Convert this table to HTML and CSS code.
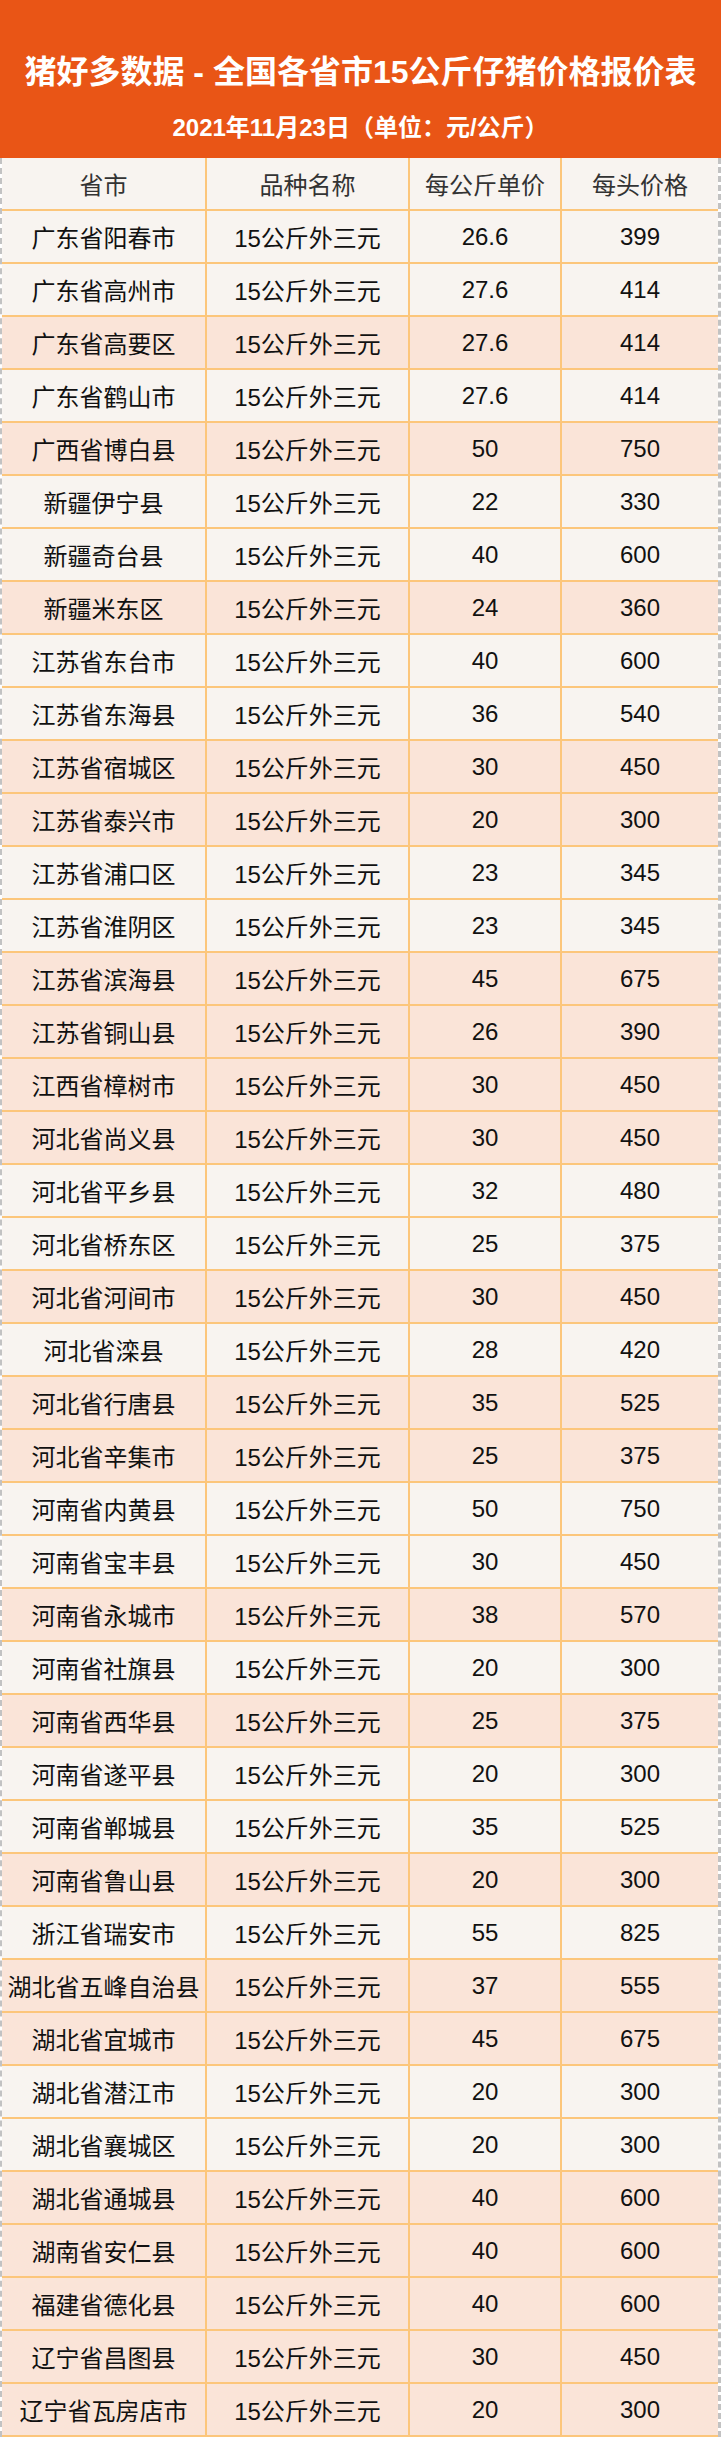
FILE: index.html
```html
<!DOCTYPE html>
<html lang="zh-CN">
<head>
<meta charset="utf-8">
<title>猪好多数据</title>
<link rel="stylesheet" href="styles.css">
</head>
<body>
<div class="page">
  <header class="banner">
    <h1 class="title">猪好多数据 - 全国各省市15公斤仔猪价格报价表</h1>
    <p class="subtitle">2021年11月23日（单位：元/公斤）</p>
  </header>
  <div class="table">
    <div class="row head"><div class="cell">省市</div><div class="cell">品种名称</div><div class="cell">每公斤单价</div><div class="cell">每头价格</div></div>
    <div class="row"><div class="cell">广东省阳春市</div><div class="cell">15公斤外三元</div><div class="cell">26.6</div><div class="cell">399</div></div>
    <div class="row"><div class="cell">广东省高州市</div><div class="cell">15公斤外三元</div><div class="cell">27.6</div><div class="cell">414</div></div>
    <div class="row peach"><div class="cell">广东省高要区</div><div class="cell">15公斤外三元</div><div class="cell">27.6</div><div class="cell">414</div></div>
    <div class="row"><div class="cell">广东省鹤山市</div><div class="cell">15公斤外三元</div><div class="cell">27.6</div><div class="cell">414</div></div>
    <div class="row peach"><div class="cell">广西省博白县</div><div class="cell">15公斤外三元</div><div class="cell">50</div><div class="cell">750</div></div>
    <div class="row"><div class="cell">新疆伊宁县</div><div class="cell">15公斤外三元</div><div class="cell">22</div><div class="cell">330</div></div>
    <div class="row"><div class="cell">新疆奇台县</div><div class="cell">15公斤外三元</div><div class="cell">40</div><div class="cell">600</div></div>
    <div class="row peach"><div class="cell">新疆米东区</div><div class="cell">15公斤外三元</div><div class="cell">24</div><div class="cell">360</div></div>
    <div class="row"><div class="cell">江苏省东台市</div><div class="cell">15公斤外三元</div><div class="cell">40</div><div class="cell">600</div></div>
    <div class="row"><div class="cell">江苏省东海县</div><div class="cell">15公斤外三元</div><div class="cell">36</div><div class="cell">540</div></div>
    <div class="row peach"><div class="cell">江苏省宿城区</div><div class="cell">15公斤外三元</div><div class="cell">30</div><div class="cell">450</div></div>
    <div class="row peach"><div class="cell">江苏省泰兴市</div><div class="cell">15公斤外三元</div><div class="cell">20</div><div class="cell">300</div></div>
    <div class="row"><div class="cell">江苏省浦口区</div><div class="cell">15公斤外三元</div><div class="cell">23</div><div class="cell">345</div></div>
    <div class="row"><div class="cell">江苏省淮阴区</div><div class="cell">15公斤外三元</div><div class="cell">23</div><div class="cell">345</div></div>
    <div class="row peach"><div class="cell">江苏省滨海县</div><div class="cell">15公斤外三元</div><div class="cell">45</div><div class="cell">675</div></div>
    <div class="row peach"><div class="cell">江苏省铜山县</div><div class="cell">15公斤外三元</div><div class="cell">26</div><div class="cell">390</div></div>
    <div class="row peach"><div class="cell">江西省樟树市</div><div class="cell">15公斤外三元</div><div class="cell">30</div><div class="cell">450</div></div>
    <div class="row peach"><div class="cell">河北省尚义县</div><div class="cell">15公斤外三元</div><div class="cell">30</div><div class="cell">450</div></div>
    <div class="row"><div class="cell">河北省平乡县</div><div class="cell">15公斤外三元</div><div class="cell">32</div><div class="cell">480</div></div>
    <div class="row"><div class="cell">河北省桥东区</div><div class="cell">15公斤外三元</div><div class="cell">25</div><div class="cell">375</div></div>
    <div class="row peach"><div class="cell">河北省河间市</div><div class="cell">15公斤外三元</div><div class="cell">30</div><div class="cell">450</div></div>
    <div class="row"><div class="cell">河北省滦县</div><div class="cell">15公斤外三元</div><div class="cell">28</div><div class="cell">420</div></div>
    <div class="row peach"><div class="cell">河北省行唐县</div><div class="cell">15公斤外三元</div><div class="cell">35</div><div class="cell">525</div></div>
    <div class="row peach"><div class="cell">河北省辛集市</div><div class="cell">15公斤外三元</div><div class="cell">25</div><div class="cell">375</div></div>
    <div class="row"><div class="cell">河南省内黄县</div><div class="cell">15公斤外三元</div><div class="cell">50</div><div class="cell">750</div></div>
    <div class="row"><div class="cell">河南省宝丰县</div><div class="cell">15公斤外三元</div><div class="cell">30</div><div class="cell">450</div></div>
    <div class="row peach"><div class="cell">河南省永城市</div><div class="cell">15公斤外三元</div><div class="cell">38</div><div class="cell">570</div></div>
    <div class="row"><div class="cell">河南省社旗县</div><div class="cell">15公斤外三元</div><div class="cell">20</div><div class="cell">300</div></div>
    <div class="row peach"><div class="cell">河南省西华县</div><div class="cell">15公斤外三元</div><div class="cell">25</div><div class="cell">375</div></div>
    <div class="row"><div class="cell">河南省遂平县</div><div class="cell">15公斤外三元</div><div class="cell">20</div><div class="cell">300</div></div>
    <div class="row"><div class="cell">河南省郸城县</div><div class="cell">15公斤外三元</div><div class="cell">35</div><div class="cell">525</div></div>
    <div class="row peach"><div class="cell">河南省鲁山县</div><div class="cell">15公斤外三元</div><div class="cell">20</div><div class="cell">300</div></div>
    <div class="row"><div class="cell">浙江省瑞安市</div><div class="cell">15公斤外三元</div><div class="cell">55</div><div class="cell">825</div></div>
    <div class="row peach"><div class="cell">湖北省五峰自治县</div><div class="cell">15公斤外三元</div><div class="cell">37</div><div class="cell">555</div></div>
    <div class="row peach"><div class="cell">湖北省宜城市</div><div class="cell">15公斤外三元</div><div class="cell">45</div><div class="cell">675</div></div>
    <div class="row"><div class="cell">湖北省潜江市</div><div class="cell">15公斤外三元</div><div class="cell">20</div><div class="cell">300</div></div>
    <div class="row"><div class="cell">湖北省襄城区</div><div class="cell">15公斤外三元</div><div class="cell">20</div><div class="cell">300</div></div>
    <div class="row peach"><div class="cell">湖北省通城县</div><div class="cell">15公斤外三元</div><div class="cell">40</div><div class="cell">600</div></div>
    <div class="row peach"><div class="cell">湖南省安仁县</div><div class="cell">15公斤外三元</div><div class="cell">40</div><div class="cell">600</div></div>
    <div class="row peach"><div class="cell">福建省德化县</div><div class="cell">15公斤外三元</div><div class="cell">40</div><div class="cell">600</div></div>
    <div class="row peach"><div class="cell">辽宁省昌图县</div><div class="cell">15公斤外三元</div><div class="cell">30</div><div class="cell">450</div></div>
    <div class="row peach"><div class="cell">辽宁省瓦房店市</div><div class="cell">15公斤外三元</div><div class="cell">20</div><div class="cell">300</div></div>
  </div>
</div>
</body>
</html>
```

FILE: styles.css
```css
* {
  box-sizing: border-box;
}

html, body {
  margin: 0;
  padding: 0;
  background: #ffffff;
}

.page {
  width: 721px;
  font-family: "Liberation Sans", "Noto Sans CJK SC", sans-serif;
}

.banner {
  height: 158px;
  background: #e95516;
  color: #ffffff;
  display: flex;
  flex-direction: column;
  align-items: center;
  padding-top: 50px;
}

.title {
  margin: 0;
  font-size: 32px;
  line-height: 44px;
  font-weight: 700;
  white-space: nowrap;
}

.subtitle {
  margin: 18px 0 0;
  font-size: 24px;
  line-height: 32px;
  font-weight: 700;
  white-space: nowrap;
}

.table {
  border-left: 2px dashed #c2c2c2;
  border-right: 3px dashed #c2c2c2;
}

.row {
  display: grid;
  grid-template-columns: 205px 203px 152px 1fr;
  height: 53px;
  border-bottom: 2px solid #fcc67b;
  background: #f8f4f0;
}

.row.peach {
  background: #fae4d8;
}

.cell {
  display: flex;
  align-items: center;
  justify-content: center;
  font-size: 24px;
  color: #111111;
  white-space: nowrap;
  border-right: 2px solid #fcc67b;
}

.cell:last-child {
  border-right: none;
}

.head .cell {
  color: #333333;
}
```
